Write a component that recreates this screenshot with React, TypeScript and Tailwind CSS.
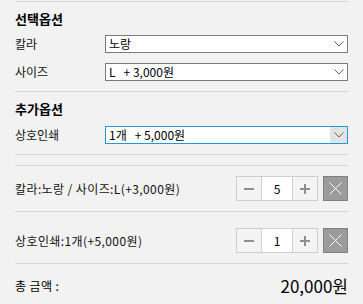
import React from "react";

const font = { fontFamily: '"Noto Sans CJK KR", "Noto Sans", sans-serif' };

function Chevron() {
  return (
    <svg width="10" height="6" viewBox="0 0 10 6" className="block">
      <polyline points="0.5,0.5 5,5 9.5,0.5" fill="none" stroke="#666" strokeWidth="1" />
    </svg>
  );
}

function FakeSelect({ value, active }: { value: string; active?: boolean }) {
  return (
    <div
      className={
        "flex h-[18px] w-[243px] items-center bg-white " +
        (active ? "border border-[#1e9ad6]" : "border border-[#7a7a7a]")
      }
    >
      <span className="flex-1 whitespace-pre pl-[3px] text-[12px] leading-none text-black">{value}</span>
      <span
        className={
          "flex h-full w-[17px] items-center justify-center " + (active ? "bg-[#e3e3e3]" : "")
        }
      >
        <Chevron />
      </span>
    </div>
  );
}

function OptionRow({ label, value, active }: { label: string; value: string; active?: boolean }) {
  return (
    <div className="flex items-center">
      <span className="w-[90px] text-[12px] leading-none text-[#111]">{label}</span>
      <FakeSelect value={value} active={active} />
    </div>
  );
}

function Qty({ n }: { n: number }) {
  return (
    <div className="flex items-center gap-[5px]">
      <div className="flex h-[25px] border border-[#cfcfcf]">
        <button className="flex w-[24px] items-center justify-center bg-[#f4f4f4]">
          <span className="block h-[2px] w-[10px] bg-[#8f8f8f]" />
        </button>
        <div className="flex w-[32px] items-center justify-center border-x border-[#cfcfcf] bg-white text-[12px] leading-none text-black">
          {n}
        </div>
        <button className="relative flex w-[24px] items-center justify-center bg-[#f4f4f4]">
          <span className="block h-[2px] w-[10px] bg-[#8f8f8f]" />
          <span className="absolute h-[10px] w-[2px] bg-[#8f8f8f]" />
        </button>
      </div>
      <button className="flex h-[25px] w-[25px] items-center justify-center border border-[#808080] bg-[#9b9b9b]">
        <svg width="13" height="13" viewBox="0 0 13 13">
          <line x1="0.5" y1="0.5" x2="12.5" y2="12.5" stroke="#fff" strokeWidth="1" />
          <line x1="12.5" y1="0.5" x2="0.5" y2="12.5" stroke="#fff" strokeWidth="1" />
        </svg>
      </button>
    </div>
  );
}

export default function App() {
  return (
    <div className="h-[304px] w-[363px] bg-[#f2f2f2] px-[15px] pt-px" style={font}>
      <div className="w-[333px]">
        <section className="border-t border-[#d6d6d6] pb-[10px] pt-[9px]">
          <h3 className="h-[16px] text-[13px] font-bold leading-[16px] text-black">선택옵션</h3>
          <div className="mt-[8px] flex flex-col gap-[10px]">
            <OptionRow label="칼라" value="노랑" />
            <OptionRow label="사이즈" value="L   + 3,000원" />
          </div>
        </section>

        <section className="border-t border-[#d6d6d6] pb-[10px] pt-[9px]">
          <h3 className="h-[16px] text-[13px] font-bold leading-[16px] text-black">추가옵션</h3>
          <div className="mt-[9px]">
            <OptionRow label="상호인쇄" value="1개   + 5,000원" active />
          </div>
        </section>

        <div className="border-t border-[#d6d6d6] pt-[10px]">
          <div className="border-t border-[#d6d6d6]">
            <div className="flex items-center justify-between py-[10px]">
              <span className="text-[12px] leading-none tracking-[0.4px] text-[#111]">
                칼라:노랑 / 사이즈:L(+3,000원)
              </span>
              <Qty n={5} />
            </div>
            <div className="flex items-center justify-between border-t border-[#d6d6d6] pb-[10px] pt-[16px]">
              <span className="text-[12px] leading-none tracking-[0.4px] text-[#111]">
                상호인쇄:1개(+5,000원)
              </span>
              <Qty n={1} />
            </div>
          </div>
          <div className="flex items-center justify-between border-t border-[#d6d6d6] pt-[13px]">
            <span className="text-[12px] leading-none tracking-[0.4px] text-black">총 금액 :</span>
            <span className="text-[17px] leading-none text-black">20,000원</span>
          </div>
        </div>
      </div>
    </div>
  );
}
